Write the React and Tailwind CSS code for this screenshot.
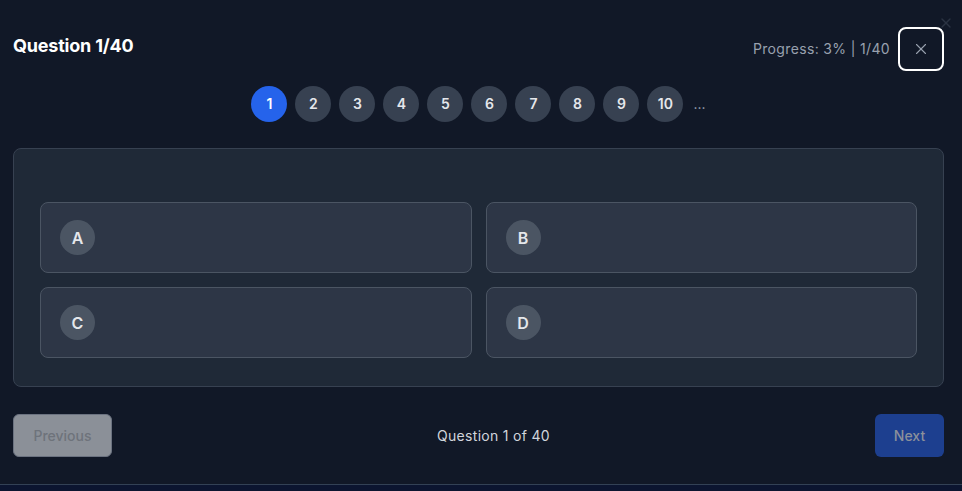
import { X } from 'lucide-react';

const OPTIONS = ['A', 'B', 'C', 'D'];
const PAGES = [1, 2, 3, 4, 5, 6, 7, 8, 9, 10];

export default function App() {
  return (
    <div className="relative h-[491px] w-full overflow-hidden bg-[#111827] font-['Inter',sans-serif] flex flex-col">
      {/* faint close of the dialog behind */}
      <X className="absolute top-[15px] right-[8px] w-4 h-4 text-[#2b3342]" strokeWidth={2} />

      <div className="flex-1 pl-[13px] pr-[18px]">
        {/* Header */}
        <div className="flex items-start justify-between pt-[27px]">
          <h2 className="text-lg font-bold text-white mt-[7px] leading-6 tracking-[-0.2px]">Question 1/40</h2>
          <div className="flex items-center gap-2">
            <span className="text-sm text-gray-400 tracking-[0.35px]">Progress: 3% | 1/40</span>
            <button className="w-[46px] h-[44px] flex items-center justify-center rounded-lg border-2 border-white text-gray-400">
              <X className="w-[18px] h-[18px]" strokeWidth={1.5} />
            </button>
          </div>
        </div>

        {/* Pagination */}
        <div className="flex items-center justify-center gap-2 mt-[15px]">
          {PAGES.map((n) => (
            <div
              key={n}
              className={`w-9 h-9 rounded-full flex items-center justify-center text-sm font-semibold ${
                n === 1 ? 'bg-[#2563eb] text-white' : 'bg-[#374151] text-gray-200'
              }`}
            >
              {n}
            </div>
          ))}
          <span className="text-gray-400 text-sm ml-0.5">...</span>
        </div>

        {/* Card */}
        <div className="mt-[26px] rounded-lg border border-[#374151] bg-[#1f2937] px-[26px] pt-[53px] pb-[28px]">
          <div className="grid grid-cols-2 gap-[14px]">
            {OPTIONS.map((o) => (
              <div
                key={o}
                className="h-[71px] rounded-lg border border-[#4b5563] bg-[#2d3646] flex items-center px-[19px]"
              >
                <div className="w-[35px] h-[35px] rounded-full bg-[#4b5563] flex items-center justify-center text-gray-200 text-base font-semibold">
                  {o}
                </div>
              </div>
            ))}
          </div>
        </div>

        {/* Footer nav */}
        <div className="flex items-center justify-between mt-[27px]">
          <button className="w-[99px] h-[43px] rounded-md border border-[#6b7280] bg-[#8b9098] text-sm font-medium text-[#6e737b]">
            Previous
          </button>
          <span className="text-sm text-gray-300 tracking-[0.3px]">Question 1 of 40</span>
          <button className="w-[69px] h-[43px] rounded-md bg-[#1d3f8f] text-sm font-medium text-[#8b909b]">
            Next
          </button>
        </div>
      </div>

      <div className="h-[7px] border-t border-[#334155] bg-[#0c1530]" />
    </div>
  );
}
